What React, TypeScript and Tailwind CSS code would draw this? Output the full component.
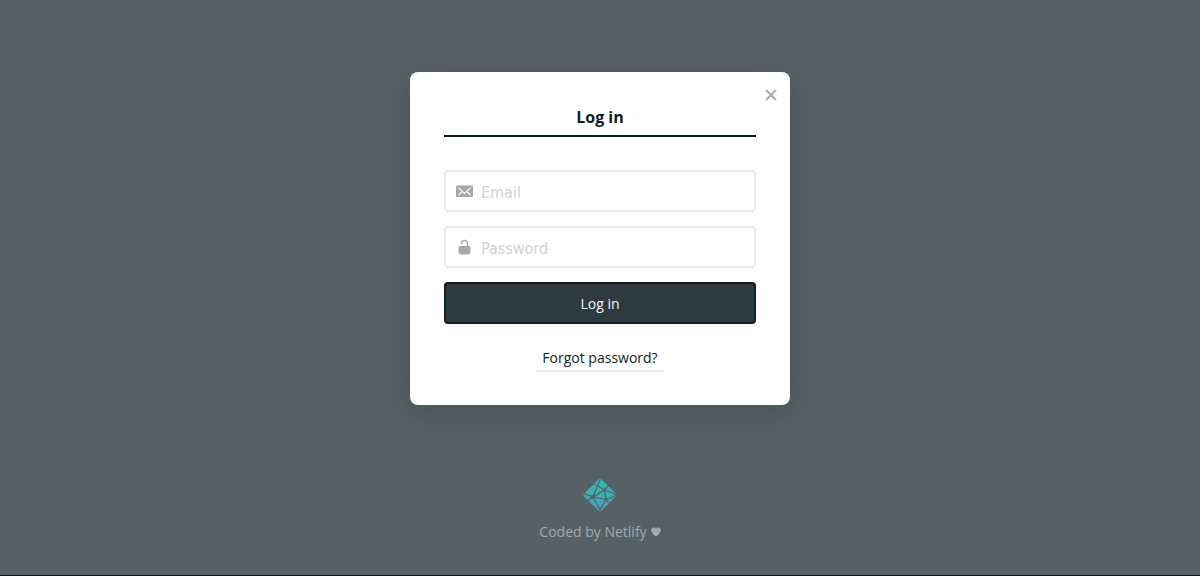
import React from "react";

function MailIcon() {
  return (
    <svg className="h-3 w-[17px]" viewBox="0 0 17 12" aria-hidden="true">
      <rect x="0" y="0.5" width="17" height="11.5" rx="1" fill="#a3a9ac" />
      <path d="M2.5 2.8 L8.5 8.4 L14.5 2.8 M2.5 10.2 L5.7 7 M14.5 10.2 L11.3 7" fill="none" stroke="#fff" strokeWidth="1.1" />
    </svg>
  );
}

function LockIcon() {
  return (
    <svg className="h-4 w-[17px]" viewBox="0 0 17 16" aria-hidden="true">
      <path d="M5.4 5.4 V4.6 A3.1 3.1 0 0 1 11.6 4.6 V7.4" fill="none" stroke="#a3a9ac" strokeWidth="1.4" />
      <path d="M2.6 8.4 Q2.6 7 4 7 H13 Q14.4 7 14.4 8.4 V13.8 Q14.4 15.6 8.5 15.6 Q2.6 15.6 2.6 13.8 Z" fill="#a3a9ac" />
    </svg>
  );
}

function NetlifyLogo() {
  return (
    <svg className="size-[34px]" viewBox="0 0 34 34" aria-hidden="true">
      <defs>
        <linearGradient id="logo-fill" x1="0" y1="0" x2="0" y2="1">
          <stop offset="0" stopColor="#2dbbb0" />
          <stop offset="1" stopColor="#4c9fc0" />
        </linearGradient>
      </defs>
      <path d="M15.8 1 Q17 0 18.2 1 L33 15.8 Q34 17 33 18.2 L18.2 33 Q17 34 15.8 33 L1 18.2 Q0 17 1 15.8 Z" fill="url(#logo-fill)" />
      <g stroke="#566166" strokeWidth="1.2" fill="none">
        <path d="M11 6 L21.5 12 L34 17 M26 7 L21.5 12 L23 21.5 L27 27 M21.5 12 L10 19 L0 15 M10 19 L18 -1 M10 19 L23 21.5 L34 17 M10 19 L18 34 M10 19 L4 23 M23 21.5 L16 34" />
      </g>
      <circle cx="21.5" cy="12" r="1.8" fill="#566166" />
      <circle cx="10" cy="19" r="2.2" fill="#566166" />
      <circle cx="23" cy="21.5" r="1.7" fill="#566166" />
    </svg>
  );
}

type FieldProps = { label: string; type: string; icon: React.ReactNode };

function Field({ label, type, icon }: FieldProps) {
  return (
    <label className="flex h-[42px] items-center gap-2 rounded border-2 border-[#e9ebeb] px-2.5">
      {icon}
      <input
        type={type}
        aria-label={label}
        placeholder={label}
        className="min-w-0 flex-1 bg-transparent pt-1 font-['DejaVu_Sans_Condensed','DejaVu_Sans',sans-serif] text-base text-[#0e1e25] outline-none placeholder:text-[#cfd2d3]"
      />
    </label>
  );
}

export default function App() {
  return (
    <div className="flex min-h-screen flex-col items-center border-b border-[#0e1518] bg-[#566166] px-4 pt-[72px] font-['Open_Sans','Noto_Sans',sans-serif] text-[#0e1e25]">
      <main className="relative w-full max-w-[380px] rounded-lg bg-white px-[34px] pt-[34px] pb-[33px] shadow-[0_8px_32px_rgba(14,30,37,0.2)]">
        <button type="button" aria-label="Close" className="absolute top-[13px] right-[9px] flex size-5 items-center justify-center">
          <svg className="size-3" viewBox="0 0 12 12" aria-hidden="true">
            <path d="M1 1 L11 11 M11 1 L1 11" stroke="#a3a9ac" strokeWidth="1.8" fill="none" />
          </svg>
        </button>
        <h1 className="border-b-2 border-[#0e1e25] pb-1.5 text-center text-base leading-[23px] font-bold">Log in</h1>
        <form className="mt-[33px] flex flex-col gap-3.5" onSubmit={(e) => e.preventDefault()}>
          <Field label="Email" type="email" icon={<MailIcon />} />
          <Field label="Password" type="password" icon={<LockIcon />} />
          <button type="submit" className="h-[42px] rounded border-2 border-[#0e1e25] bg-[#2d3b41] pt-0.5 text-sm text-[#f4f5f5]">
            Log in
          </button>
        </form>
        <div className="mt-6 flex justify-center">
          <a href="#forgot" className="border-b-2 border-[#e9ebeb] px-1.5 pb-0.5 text-sm">
            Forgot password?
          </a>
        </div>
      </main>
      <a href="#netlify" className="mt-[73px] flex flex-col items-center gap-2.5 text-sm text-[#a3a9ac]">
        <NetlifyLogo />
        <span className="flex items-center gap-1">
          Coded by Netlify
          <svg className="h-2.5 w-2.5" viewBox="0 0 10 10" aria-hidden="true">
            <path d="M5 9.6 C3 8 0.2 5.8 0.2 3.2 C0.2 0.2 3.8 -0.3 5 2 C6.2 -0.3 9.8 0.2 9.8 3.2 C9.8 5.8 7 8 5 9.6 Z" fill="#a3a9ac" />
          </svg>
        </span>
      </a>
    </div>
  );
}
